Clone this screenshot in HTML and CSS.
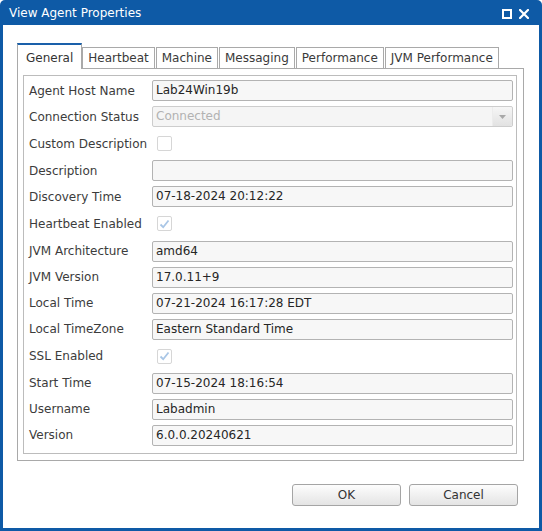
FILE: index.html
```html
<!DOCTYPE html>
<html>
<head>
<meta charset="utf-8">
<link rel="stylesheet" href="styles.css">
</head>
<body>
<div class="window">
  <div class="titlebar">
    <span class="title">View Agent Properties</span>
    <span class="win-icons">
      <svg width="10" height="10" viewBox="0 0 10 10"><rect x="1" y="1" width="8" height="8" fill="none" stroke="#fff" stroke-width="2"/></svg>
      <svg width="10" height="10" viewBox="0 0 10 10"><path d="M1 1L9 9M9 1L1 9" stroke="#fff" stroke-width="2.2" stroke-linecap="square"/></svg>
    </span>
  </div>
  <div class="content">
    <div class="tabs">
      <div class="tab active">General</div>
      <div class="tab">Heartbeat</div>
      <div class="tab">Machine</div>
      <div class="tab">Messaging</div>
      <div class="tab">Performance</div>
      <div class="tab">JVM Performance</div>
    </div>
    <div class="panel">
      <div class="form">
        <div class="row"><label>Agent Host Name</label><div class="field">Lab24Win19b</div></div>
        <div class="row"><label>Connection Status</label><div class="field select"><span class="sel-text">Connected</span><span class="sel-btn"><svg width="7" height="4" viewBox="0 0 7 4"><path d="M0 0H7L3.5 4Z" fill="#a8a8a8"/></svg></span></div></div>
        <div class="row cbrow"><label>Custom Description</label><span class="checkbox"></span></div>
        <div class="row"><label>Description</label><div class="field"></div></div>
        <div class="row"><label>Discovery Time</label><div class="field">07-18-2024 20:12:22</div></div>
        <div class="row cbrow"><label>Heartbeat Enabled</label><span class="checkbox"><svg width="11" height="10" viewBox="0 0 11 10"><path d="M1.5 5.5L4.2 8.2L9.5 1.5" fill="none" stroke="#a9c6e6" stroke-width="1.8"/></svg></span></div>
        <div class="row"><label>JVM Architecture</label><div class="field">amd64</div></div>
        <div class="row"><label>JVM Version</label><div class="field">17.0.11+9</div></div>
        <div class="row"><label>Local Time</label><div class="field">07-21-2024 16:17:28 EDT</div></div>
        <div class="row"><label>Local TimeZone</label><div class="field">Eastern Standard Time</div></div>
        <div class="row cbrow"><label>SSL Enabled</label><span class="checkbox"><svg width="11" height="10" viewBox="0 0 11 10"><path d="M1.5 5.5L4.2 8.2L9.5 1.5" fill="none" stroke="#a9c6e6" stroke-width="1.8"/></svg></span></div>
        <div class="row"><label>Start Time</label><div class="field">07-15-2024 18:16:54</div></div>
        <div class="row"><label>Username</label><div class="field">Labadmin</div></div>
        <div class="row"><label>Version</label><div class="field">6.0.0.20240621</div></div>
      </div>
    </div>
    <div class="buttons">
      <button class="btn">OK</button>
      <button class="btn">Cancel</button>
    </div>
  </div>
</div>
</body>
</html>
```
FILE: styles.css
```css
html, body {
  margin: 0;
  padding: 0;
  background: #ffffff;
}
body {
  font-family: "DejaVu Sans", Verdana, sans-serif;
  font-size: 12px;
  color: #3a3a3a;
}
.window {
  width: 542px;
  height: 531px;
  box-sizing: border-box;
  background: #0e5aa6;
  border-radius: 5px 5px 0 0;
  display: flex;
  flex-direction: column;
}
.titlebar {
  height: 25px;
  flex: none;
  display: flex;
  align-items: center;
  justify-content: space-between;
  padding: 0 13px 0 9px;
  color: #ffffff;
}
.title {
  font-size: 12px;
}
.win-icons {
  display: flex;
  gap: 7px;
  align-items: center;
  padding-top: 2px;
}
.win-icons svg {
  display: block;
}
.content {
  flex: 1;
  margin: 0 3px 3px 3px;
  background: #ffffff;
  padding: 18px 15px 0 14px;
  display: flex;
  flex-direction: column;
}
.tabs {
  display: flex;
  align-items: flex-end;
  gap: 1px;
  height: 25px;
}
.tab {
  height: 21px;
  box-sizing: border-box;
  border: 1px solid #a9a9a9;
  border-bottom: none;
  padding: 0 5px;
  line-height: 20px;
  color: #3a3a3a;
  background: #ffffff;
  white-space: nowrap;
}
.tab.active {
  position: relative;
  height: 26px;
  margin-bottom: -1px;
  margin-right: -1px;
  border-top: 2px solid #1a60aa;
  padding: 3px 8px 0 8px;
  line-height: 20px;
  color: #333333;
}
.panel {
  border: 1px solid #a9a9a9;
  padding: 6px 6px 6px 5px;
}
.form {
  border: 1px solid #bcbcbc;
  padding: 4px 3px 7px 5px;
  display: flex;
  flex-direction: column;
  gap: 5px;
}
.row {
  display: grid;
  grid-template-columns: 123px 1fr;
  align-items: center;
  height: 21px;
}
.row.cbrow {
  height: 23.33px;
}
.row label {
  color: #3c3c3c;
  white-space: nowrap;
}
.field {
  height: 21px;
  box-sizing: border-box;
  border: 1px solid #b3b3b3;
  border-radius: 2px;
  background: #f7f7f7;
  padding: 0 3px;
  line-height: 19px;
  color: #262626;
  white-space: nowrap;
}
.field.select {
  display: flex;
  padding: 0 0 0 3px;
  border-color: #cdcdcd;
  background: #f5f5f5;
}
.sel-text {
  flex: 1;
  color: #b2b2b2;
}
.sel-btn {
  width: 19px;
  display: flex;
  align-items: center;
  justify-content: center;
  background: linear-gradient(#f6f6f6, #e2e2e2);
  border-left: 1px solid #ececec;
  border-radius: 0 2px 2px 0;
}
.sel-btn svg {
  display: block;
}
.checkbox {
  margin-left: 5px;
  width: 15px;
  height: 15px;
  box-sizing: border-box;
  border: 1px solid #d6d6d6;
  border-radius: 2px;
  background: #ffffff;
  display: flex;
  align-items: center;
  justify-content: center;
}
.checkbox svg {
  display: block;
}
.buttons {
  display: flex;
  justify-content: flex-end;
  gap: 8px;
  margin-top: 23px;
  padding-right: 6px;
}
.btn {
  width: 109px;
  height: 22px;
  box-sizing: border-box;
  border: 1px solid #a5a5a5;
  border-radius: 3px;
  background: linear-gradient(#fdfdfd, #e4e4e4);
  font-family: "DejaVu Sans", Verdana, sans-serif;
  font-size: 12px;
  color: #333333;
  padding: 0;
}
```
